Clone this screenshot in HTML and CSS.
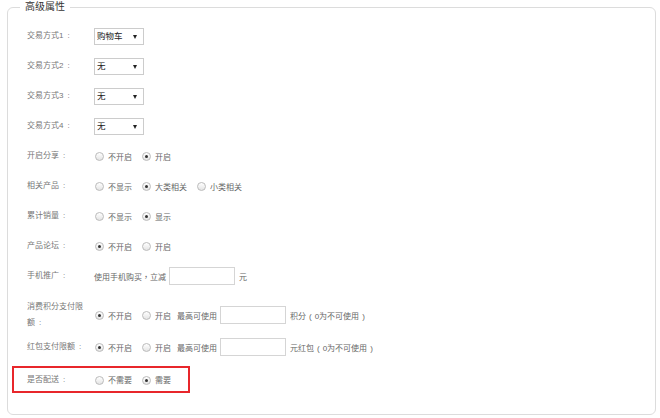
FILE: index.html
```html
<!DOCTYPE html>
<html lang="zh-CN">
<head>
    <meta charset="UTF-8">
    <title>高级属性</title>
    <link rel="stylesheet" href="styles.css">
</head>
<body>

<div class="wrap">
<fieldset class="panel">
    <legend>高级属性</legend>

    <div class="row">
        <span class="label">交易方式1</span>
        <span class="sel"><select><option>购物车</option></select></span>
    </div>
    <div class="row">
        <span class="label">交易方式2</span>
        <span class="sel"><select><option>无</option></select></span>
    </div>
    <div class="row">
        <span class="label">交易方式3</span>
        <span class="sel"><select><option>无</option></select></span>
    </div>
    <div class="row">
        <span class="label">交易方式4</span>
        <span class="sel"><select><option>无</option></select></span>
    </div>

    <div class="row">
        <span class="label">开启分享</span>
        <label class="opt"><input type="radio" name="share">不开启</label>
        <label class="opt"><input type="radio" name="share" checked>开启</label>
    </div>
    <div class="row">
        <span class="label">相关产品</span>
        <label class="opt"><input type="radio" name="rel">不显示</label>
        <label class="opt"><input type="radio" name="rel" checked>大类相关</label>
        <label class="opt"><input type="radio" name="rel">小类相关</label>
    </div>
    <div class="row">
        <span class="label">累计销量</span>
        <label class="opt"><input type="radio" name="sales">不显示</label>
        <label class="opt"><input type="radio" name="sales" checked>显示</label>
    </div>
    <div class="row">
        <span class="label">产品论坛</span>
        <label class="opt"><input type="radio" name="forum" checked>不开启</label>
        <label class="opt"><input type="radio" name="forum">开启</label>
    </div>
    <div class="row">
        <span class="label">手机推广</span>
        <span class="text">使用手机购买<span class="punct" lang="zh-TW">，</span>立减</span>
        <input type="text" class="box">
        <span class="text">元</span>
    </div>

    <div class="row tall">
        <span class="label">消费积分支付限额</span>
        <label class="opt"><input type="radio" name="points" checked>不开启</label>
        <label class="opt"><input type="radio" name="points">开启</label>
        <span class="text">最高可使用</span>
        <input type="text" class="box">
        <span class="text">积分<span class="paren">(</span>0为不可使用<span class="paren">)</span></span>
    </div>
    <div class="row">
        <span class="label">红包支付限额</span>
        <label class="opt"><input type="radio" name="bonus" checked>不开启</label>
        <label class="opt"><input type="radio" name="bonus">开启</label>
        <span class="text">最高可使用</span>
        <input type="text" class="box">
        <span class="text">元红包<span class="paren">(</span>0为不可使用<span class="paren">)</span></span>
    </div>

    <div class="row marked">
        <span class="label">是否配送</span>
        <label class="opt"><input type="radio" name="ship">不需要</label>
        <label class="opt"><input type="radio" name="ship" checked>需要</label>
    </div>
</fieldset>
</div>

</body>
</html>
```

FILE: styles.css
```css
body {
    margin: 0;
    padding: 0;
    background: #fff;
    font-family: "Liberation Sans", "Noto Sans CJK SC", sans-serif;
    font-size: 8px;
    color: #777;
}
.wrap {
    padding: 0 4px 0 7px;
}
.panel {
    margin: 0;
    height: 415px;
    box-sizing: border-box;
    padding: 7px 10px 0 19px;
    border: 1px solid #dcdcdc;
    border-radius: 6px;
}
.panel legend {
    margin-left: -7px;
    padding: 0 5px;
    font-size: 10px;
    line-height: 14px;
    color: #333;
}
.row {
    display: flex;
    align-items: center;
    height: 30px;
}
.label {
    width: 67px;
    flex: none;
    line-height: 16px;
}
.label::after {
    content: ":";
    margin-left: 4px;
}
.punct {
    font-family: "Noto Sans CJK TC", sans-serif;
}
.paren {
    margin: 0 3px;
}
.row.tall {
    height: 41px;
    padding-top: 7px;
    box-sizing: border-box;
}
.row.tall .label {
    width: 58px;
    margin-right: 9px;
}
.row.marked {
    margin: 4px 0 0 -15px;
    width: 178px;
    height: 27px;
    box-sizing: border-box;
    padding-left: 13px;
    border: 2px solid #e8262b;
}

/* select */
.sel {
    position: relative;
    display: inline-block;
}
.sel select {
    appearance: none;
    -webkit-appearance: none;
    width: 50px;
    height: 17px;
    padding: 0 0 0 2px;
    border: 1px solid #ccc;
    background: #fff;
    font-family: inherit;
    font-size: 8.5px;
    color: #222;
    border-radius: 0;
}
.sel::after {
    content: "";
    position: absolute;
    right: 7px;
    top: 7px;
    border-left: 2px solid transparent;
    border-right: 2px solid transparent;
    border-top: 4px solid #222;
}

/* radio */
.opt {
    display: inline-flex;
    align-items: center;
    margin-right: 9px;
    color: #666;
}
.opt input {
    appearance: none;
    -webkit-appearance: none;
    width: 9px;
    height: 9px;
    margin: 1px 4px 0 1px;
    border: 1px solid #bbb;
    border-radius: 50%;
    background: linear-gradient(#fff, #e4e4e4);
    box-sizing: border-box;
    position: relative;
}
.opt input:checked::after {
    content: "";
    position: absolute;
    left: 2px;
    top: 2px;
    width: 3px;
    height: 3px;
    border-radius: 50%;
    background: #333;
}

.text {
    color: #666;
}
.opt + .text {
    margin-left: -3px;
}
.box {
    width: 66px;
    height: 18px;
    box-sizing: border-box;
    margin: 0 4px 0 3px;
    border: 1px solid #d5d5d5;
    padding: 0 3px;
    font-size: 9px;
}
```
